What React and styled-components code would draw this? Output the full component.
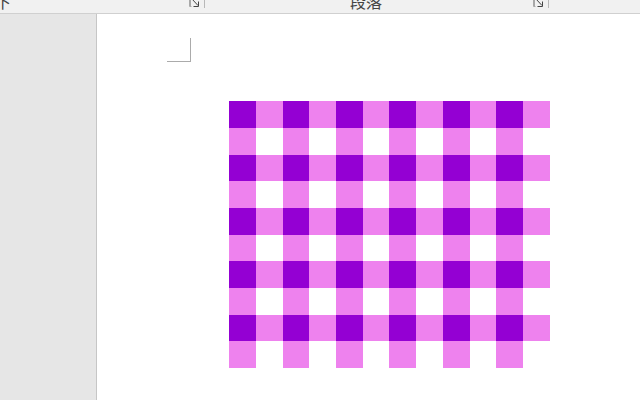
import styled, { createGlobalStyle } from "styled-components";

const GlobalStyle = createGlobalStyle`
  html, body {
    margin: 0;
    padding: 0;
    height: 400px;
    overflow: hidden;
    background: #fff;
  }
`;

const COL_SIZES = [27, 27, 26, 27, 27, 26, 27, 27, 27, 26, 27, 27];
const ROW_SIZES = [27, 27, 26, 27, 27, 26, 27, 27, 26, 27];

const cellColor = (row, col) => {
  if (row % 2 === 0) return col % 2 === 0 ? "dark" : "light";
  return col % 2 === 0 ? "light" : "blank";
};

const Launcher = () => (
  <LauncherIcon viewBox="0 0 11 11" width="11" height="11">
    <path d="M0.5 0 V10.5 H2.5 M1.5 0 V10.5" fill="none" stroke="#a8a8a8" />
    <path d="M3 3 L9 9.5 M9.5 5.5 V10.5 H4.5" fill="none" stroke="#444" />
  </LauncherIcon>
);

const App = () => {
  const cells = [];
  ROW_SIZES.forEach((_, r) => {
    COL_SIZES.forEach((_, c) => {
      cells.push(<Cell key={`${r}-${c}`} $tone={cellColor(r, c)} />);
    });
  });
  return (
    <Wrapper>
      <GlobalStyle />
      <Ribbon>
        <FontGroup>
          <FontLabel>下</FontLabel>
          <Launcher />
        </FontGroup>
        <ParagraphGroup>
          <GroupLabel>段落</GroupLabel>
          <Launcher />
        </ParagraphGroup>
      </Ribbon>
      <Workspace>
        <Sidebar />
        <Page>
          <MarginMark />
          <Gingham>{cells}</Gingham>
        </Page>
      </Workspace>
    </Wrapper>
  );
};

const Wrapper = styled.div`
  width: 640px;
  height: 400px;
  display: flex;
  flex-direction: column;
  overflow: hidden;
`;
const Ribbon = styled.div`
  height: 13px;
  flex: none;
  display: flex;
  background: #f1f1f1;
  border-bottom: 1px solid #d0d0d0;
  overflow: hidden;
`;
const FontGroup = styled.div`
  width: 204px;
  height: 8px;
  display: flex;
  justify-content: space-between;
  border-right: 1px solid #b8b8b8;
`;
const ParagraphGroup = styled.div`
  width: 344px;
  height: 8px;
  padding-left: 145px;
  box-sizing: border-box;
  display: flex;
  justify-content: space-between;
  border-right: 1px solid #b8b8b8;
`;
const GroupLabel = styled.span`
  font-family: "Noto Sans CJK SC", "Liberation Sans", sans-serif;
  font-size: 16px;
  line-height: 16px;
  height: 16px;
  margin-top: -7px;
  color: #444;
`;
const FontLabel = styled(GroupLabel)`
  margin-left: -5px;
`;
const LauncherIcon = styled.svg`
  display: block;
  margin: -4px 4px 0 0;
  flex: none;
`;
const Workspace = styled.div`
  flex: 1;
  display: flex;
`;
const Sidebar = styled.div`
  width: 96px;
  flex: none;
  background: #e6e6e6;
  border-right: 1px solid #c6c6c6;
`;
const Page = styled.div`
  flex: 1;
  background: #fff;
  padding: 24px 0 0 70px;
`;
const MarginMark = styled.div`
  width: 23px;
  height: 23px;
  border-right: 1px solid #ababab;
  border-bottom: 1px solid #ababab;
`;
const Gingham = styled.div`
  width: 321px;
  height: 267px;
  margin: 39px 0 0 62px;
  display: grid;
  grid-template-columns: ${COL_SIZES.map((s) => `${s}px`).join(" ")};
  grid-template-rows: ${ROW_SIZES.map((s) => `${s}px`).join(" ")};
`;
const Cell = styled.div`
  background: ${(p) =>
    p.$tone === "dark" ? "#9400d3" : p.$tone === "light" ? "#ee82ee" : "#fff"};
`;

export default App;
